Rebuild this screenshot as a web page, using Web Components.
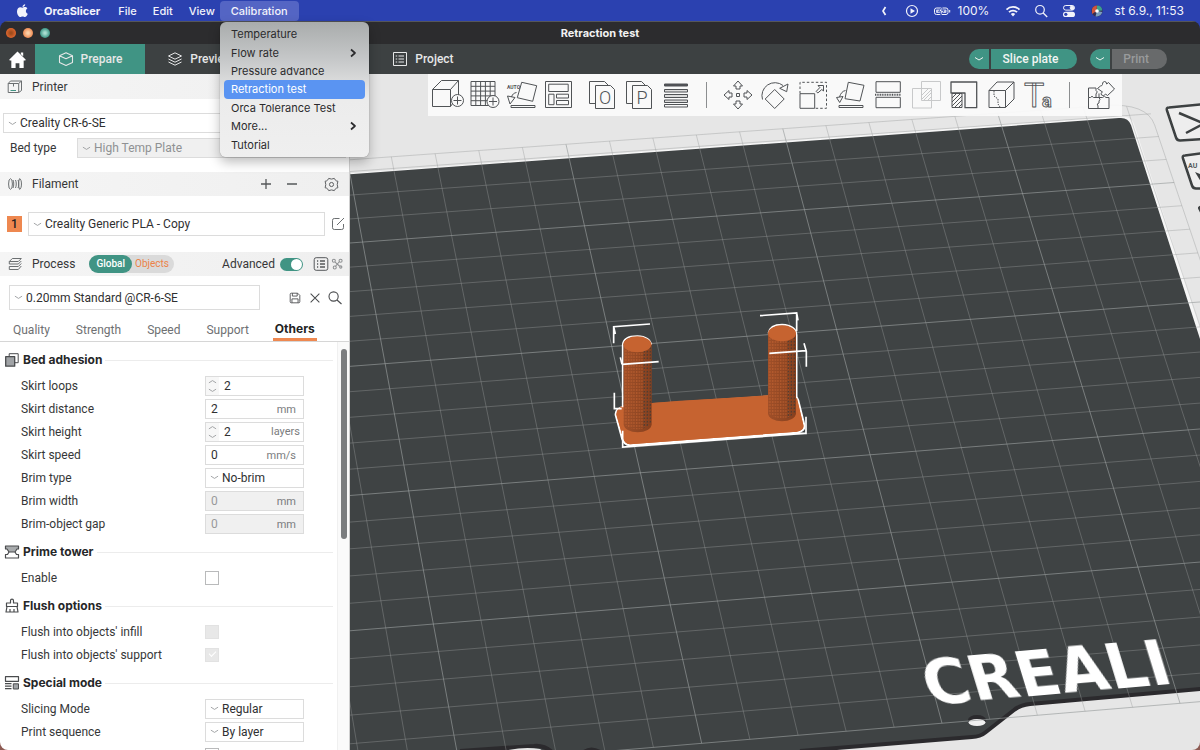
<!DOCTYPE html>
<html lang="en">
<head>
<meta charset="utf-8">
<title>OrcaSlicer</title>
<style>
  html, body { margin: 0; height: 100%; overflow: hidden; }
  body {
    font: 12px/16px Roboto, "Liberation Sans", sans-serif;
    color: #363738;
    background: #8d5a52;
  }
</style>
</head>
<body>
<orca-desktop></orca-desktop>

<script>
const BASE = `<style>
  *, *::before, *::after { box-sizing: border-box; }
  :host { display: block; }
  button, input, select { font: inherit; color: inherit; margin: 0; padding: 0; border: 0; background: none; border-radius: 0; appearance: none; -webkit-appearance: none; outline: none; }
  button { display: inline-flex; align-items: center; justify-content: center; white-space: nowrap; }
</style>`;

function define(name, html, setup) {
  const template = document.createElement('template');
  template.innerHTML = BASE + html;
  customElements.define(name, class extends HTMLElement {
    constructor() {
      super();
      this.attachShadow({ mode: 'open' }).append(template.content.cloneNode(true));
    }
    connectedCallback() {
      if (setup && !this.ready) { this.ready = true; setup.call(this, this.shadowRoot); }
    }
  });
}

/* Puts the icon named by the host's "icon" attribute in place of the <i> marker */
function placeIcon(host) {
  const icon = document.createElement('ui-icon');
  icon.setAttribute('name', host.getAttribute('icon'));
  host.shadowRoot.querySelector('i').replaceWith(icon);
}

/* ---------- icons: [viewBox size, markup] ---------- */
const plus = (x, y) => `<circle cx="${x}" cy="${y}" r="6" fill="#fafafa"/><path d="M${x - 4} ${y}h8M${x} ${y - 4}v8"/>`;
const ICONS = {
  apple: [16, '<path fill="currentColor" stroke="none" d="M11.2 1.2c.1 1.2-.9 2.7-2.7 2.8-.1-1.3 1.1-2.7 2.7-2.8zM8.4 4.7c.5 0 1.300-.6 2.500-.6 1 0 1.900.5 2.500 1.300-2.300 1.400-1.800 4.500.4 5.400-.6 1.600-1.700 3.300-2.900 3.300-.9 0-1.200-.5-2.300-.5s-1.500.5-2.300.5C4.700 14.100 3 11.100 3 8.500c0-2.800 1.700-4.300 3.300-4.300 1 0 1.700.5 2.100.5z"/>'],
  back: [16, '<path stroke-width="1.700" d="M9.500 4 7 8l2.500 4"/>'],
  play: [16, '<circle cx="8" cy="8" r="5.500" stroke-width="1.200"/><path fill="currentColor" stroke="none" d="M6.500 5.300v5.400L11 8z"/>'],
  battery: [18, '<rect x="1.500" y="6" width="13.500" height="6.500" rx="2"/><rect x="3" y="7.500" width="10.500" height="3.500" rx="1" fill="currentColor" stroke="none" opacity=".8"/><path fill="currentColor" stroke="#2b41b0" stroke-width=".8" d="M9.500 4 5.500 9.700H8L7 14.500l4-5.900H8.700z"/><path d="M16.700 8v2.500"/>'],
  wifi: [16, '<path stroke-width="1.800" d="M1.500 6.600a9.200 9.200 0 0 1 13 0M4 9.200a5.700 5.700 0 0 1 8 0"/><path fill="currentColor" stroke="none" d="m8 13.500-2.200-2.400a3 3 0 0 1 4.400 0z"/>'],
  search: [16, '<circle cx="7" cy="6.800" r="4.300" stroke-width="1.200"/><path stroke-width="1.300" d="m10.200 10 4 4"/>'],
  control: [16, '<rect x="2.500" y="2.500" width="11" height="4.600" rx="2.300"/><circle cx="11" cy="4.800" r="1.800" fill="currentColor"/><rect x="2" y="8.700" width="12" height="5.300" rx="2.600" fill="currentColor" stroke="none"/><circle cx="4.800" cy="11.300" r="1.600" fill="#2b41b0" stroke="none"/>'],
  siri: [16, '<circle cx="8" cy="8" r="5.600" fill="#352f55" stroke="none"/><path fill="#d0553c" stroke="none" d="M3 6a5.500 5.500 0 0 1 5-3.500L7.500 8 3 11z"/><path fill="#3ba08c" stroke="none" d="M8 2.500a5.500 5.500 0 0 1 5.300 5L8 8z"/><path fill="#7a9fc0" stroke="none" d="M13.300 9 8 8l-1.500 5.200c3 .8 6-1 6.800-4.200z"/><circle cx="8" cy="8" r="1.800" fill="#fff" stroke="none"/>'],
  home: [20, '<path fill="currentColor" stroke="none" d="M10 1.500 18.500 10c.4.500.1 1-.5 1h-1.500v8h-4.500v-5H8v5H3.500v-8H2c-.6 0-.9-.5-.5-1zM13.500 2.500h2.500v4l-2.500-2z"/>'],
  prepare: [16, '<path stroke-width="1.100" d="M8 1.700 14.500 4.700v6.800L8 14.500 1.500 11.500V4.700zM1.500 4.700 8 7.700l6.500-3"/>'],
  preview: [16, '<path d="M8 1.800 14.500 5 8 8.200 1.500 5zM1.500 8 8 11.200 14.500 8M1.500 11 8 14.200l6.500-3.200"/>'],
  project: [16, '<rect x="1.500" y="1.500" width="13" height="13"/><path d="M3.700 5h1.500M3.700 8h1.500M3.700 11h1.500M6.500 5h5.500M6.500 8h5.500M6.500 11h5.500"/>'],
  params: [16, '<rect x="1.200" y="1.700" width="13.600" height="12.600" rx="2"/><path stroke-width="1.300" d="M4 5h1.200M4 8h1.200M4 11h1.200M7 5h5M7 8h5M7 11h5"/>'],
  printer: [16, '<path d="M1.200 4.500h10.500v9H1.200zM1.200 4.500 3.500 2h11v9.500l-2.800 2M11.700 4.500 14.500 2M6.500 4.500v3"/><path stroke="#409484" d="M3.500 11.500h5.500"/>'],
  spool: [16, '<ellipse cx="3.500" cy="8" rx="1.900" ry="5.300"/><path d="M6 4c1 2 1 6 0 8M8.500 4c1 2 1 6 0 8M11 4c1 2 1 6 0 8M12.500 2.700c2.600 0 2.600 10.600 0 10.600-1.200-2.600-1.200-8 0-10.600z"/>'],
  plus: [16, '<path stroke-width="1.300" d="M3 8h10M8 3v10"/>'],
  minus: [16, '<path stroke-width="1.300" d="M3 8h10"/>'],
  gear: [16, '<path d="M5 1.500q3 1.400 6 0l1.300 2q.3.700 2.500 1-1.400 3.500 0 7-2.200.3-2.500 1l-1.300 2q-3-1.400-6 0l-1.300-2q-.3-.7-2.500-1 1.400-3.500 0-7 2.200-.3 2.500-1z"/><circle cx="8" cy="8" r="2.200"/>'],
  edit: [16, '<path d="M9.500 2.500H4.300Q2.500 2.500 2.500 4.300v7.400q0 1.800 1.800 1.800h7.400q1.800 0 1.800-1.800V8M7 9l7-7"/>'],
  process: [16, '<path d="M5.300 2.500h9l-3 3h-9zM2.300 8h9l3-3M2.300 10.500h9l3-3M2.300 13.500h9l3-3.500M2.300 5.500v2.500M2.300 10.500v3"/>'],
  nodes: [16, '<g stroke-width="1.400"><circle cx="3.800" cy="3.600" r="2"/><circle cx="12.800" cy="3.600" r="2"/><circle cx="5" cy="12.600" r="2"/><circle cx="13" cy="12" r="1.500"/><path d="m5.500 5.500 6 5.500M11 5 6 11"/></g>'],
  save: [16, '<path d="M2.500 3.800q0-1.300 1.300-1.300h7.200l2.500 2.500v7.200q0 1.300-1.300 1.300H3.800q-1.300 0-1.300-1.300zM5 2.500v3.300h5.500V2.500M4.500 13.500V9h7v4.500"/>'],
  close: [16, '<path stroke-width="1.200" d="m3 3 10 10M13 3 3 13"/>'],
  find: [16, '<circle cx="6.600" cy="6.500" r="4.600" stroke-width="1.100"/><path stroke-width="1.100" d="m10 10 4.500 4"/>'],
  down: [10, '<path d="m1 3.500 4 2.500 4-2.500"/>'],
  right: [10, '<path stroke-width="1.700" d="m3 1.500 4 3.500-4 3.500"/>'],
  adhesion: [16, '<rect x="5.200" y="1.700" width="9" height="9"/><rect x="1.700" y="4.700" width="9" height="9.500" fill="#a0a3a6" stroke-width="1.300"/>'],
  tower: [16, '<path fill="#a8abad" stroke-width="1.200" d="M1.500 2h13v3H13l-2 3H5L3 5H1.500z"/><path stroke-width="1.200" d="M5 8 3.500 10.500h-2v3.500h13v-3.500h-2L11 8"/>'],
  flush: [16, '<path stroke-width="1.200" d="M6.500 5V2.700a1.500 1.500 0 0 1 3 0V5h4v3.500h-11V5zM3 8.500 2 14h12l-1-5.500M6 14v-3M10 14v-3"/>'],
  special: [16, '<path stroke-width="1.200" d="M1.500 1.700h13v4.600h-13zM1 8.700h6.500M1 11.200h6.500M1 13.700h6.500"/><rect x="9.300" y="8.800" width="5.200" height="5.200" fill="#a0a3a6"/>'],

  addCube: [32, `<path d="M.5 10.500h18v17H.5zM.5 10.500l9-9h17v15l-8 11M18.500 10.500l8-9"/>${plus(25.5, 21.5)}`],
  addPlate: [32, `<path d="M2 2.500h24v24H2zM6.800 2.500v24M11.600 2.500v24M16.400 2.500v24M21.200 2.500v24M2 7.300h24M2 12.100h24M2 16.900h24M2 21.700h24"/>${plus(24, 22.500)}`],
  autoOrient: [32, '<path d="M15.700 3.300l15 3.400-4 15.600-15.400-3.600zM5 26.500h24v2H5zM1.500 17l7.500 1.500-5 6.500zM5.500 18c1-3 2.500-4 5-4.500"/><text x="1" y="10" font-size="5" font-weight="700" fill="currentColor" stroke="none">AUTO</text>'],
  arrange: [32, '<path d="M2.500 2.500h26v26h-26zM5.700 5.200h19.500v7.300H5.700zM5.700 15.200h5.300v10.500H5.700zM13.500 15.200h12v3.800h-12zM13.500 21.500h12v4.200h-12z"/>'],
  objects: [32, '<path d="M9 24.500H3.500v-22h15l4 4M9.500 6.500h15l4 4v19h-19z"/><text x="19" y="25" font-size="18" font-family="Roboto" font-weight="300" text-anchor="middle" fill="currentColor" stroke="none">O</text>'],
  parts: [32, '<path d="M9 24.500H3.500v-22h15l4 4M9.500 6.500h15l4 4v19h-19z"/><text x="19" y="25" font-size="18" font-family="Roboto" font-weight="300" text-anchor="middle" fill="currentColor" stroke="none">P</text>'],
  layers: [32, '<path fill="currentColor" d="M4.500 5h23v2h-23z"/><path fill="#ddd" d="M4.500 10.500h23v2.500h-23zM4.500 15.500h23v3h-23zM4.500 21h23v2.500h-23z"/><path d="M4.500 25.500h23v2.500h-23z"/>'],
  move: [32, '<path d="M14.500 14.500h3v3h-3zM16 2l4.500 5h-2.500v3h-4V7h-2.500zM16 30l4.500-5h-2.500v-3h-4v3h-2.500zM2 16l5-4.500V14h3v4H7v2.500zM30 16l-5-4.500V14h-3v4h3v2.500z"/>'],
  rotate: [32, '<path d="M15.700 10.500l9.500 9.500-9.500 9.500L6.200 20zM3.500 20.500A13 13 0 0 1 24 6.500M29 5l-1.300 7.700-7-3.400z"/>'],
  scale: [32, '<path stroke-dasharray="2.500 2" d="M3 14.500v-11.200h26.500v26h-11"/><path d="M3 14.700h14.700v14.600H3zM21 6.500h5.500V12l-1.700-1.500-4 3.500-1.600-1.600 3.600-3.800z"/>'],
  lay: [32, '<path d="M14.300 3.300l15.700 3-4 15.700-15-2.300zM5 26.500h24v2H5zM2.500 18.500l6.500-1-3.300 6zM5.500 18c1-3.500 3-6 6-6.500"/>'],
  cut: [32, '<path d="M4 2.700h24.300v10.600H4zM4 18.300h24.300v10.400H4z"/><path stroke-width="2" stroke-dasharray="1 .7" d="M3 15.800h26"/>'],
  boolean: [32, '<path stroke="#c8c9ca" d="M2.500 9.500h19v19.500h-19zM11.500 2.500h19v19h-19zM12 16l6-6M12 20l9-9M14 21l7-7M18 21l3-3"/>'],
  paint: [32, '<path stroke-width="1.300" d="M4 3h25.700v25.700H18V14H4z"/><path d="M5 14.500h10v14H5zM5 19l4.500-4.500M5 23l8.500-8.500M5 27l10-10M7.500 28.500 15 21M11.500 28.500 15 25"/>'],
  seam: [32, '<path d="M4 11.500h16.500v17H4zM4 11.500 12 3h17v17l-8.500 8.500M20.500 11.500 29 3"/><path stroke-dasharray="1.500 1" d="M9 12v5l4 3v5l2 3"/>'],
  emboss: [32, '<text x="2" y="28" font-size="34" font-family="Roboto" fill="#fafafa" stroke-width=".9">T</text><text x="20" y="28" font-size="18" font-family="Roboto" font-weight="700" fill="#fafafa" stroke-width=".9">a</text>'],
  assembly: [32, '<path d="M3.500 9h7.500v2.500q2.500 1 0 3.500v3.500H8.500q-1.500-2.500-3 0h-2zM3.500 18.500v11h20.500v-11h-3q-1.500-2.500-3.500 0H14v-4M14 18.500q2 2 0 3.500v2q-3 .5-1 3v2.500M11 18.500h3"/><path fill="#fafafa" d="M12.500 9.500l3-2.500q1.500 0 2-1.500-.5-2.500 2-3 2 0 2.200 2.500l1.800-1.500 6 6.500-7 6.500-2-1.500q-1.500 3-4 1-1.500-2 1-3z"/>']
};

define('ui-icon', `<style>
  :host { display: inline-flex; flex: none; }
  svg { display: block; overflow: visible; fill: none; stroke: currentColor; stroke-linejoin: round; }
</style><svg aria-hidden="true"></svg>`, function (root) {
  const [box, body] = ICONS[this.getAttribute('name')];
  const size = this.getAttribute('size') || box;
  const svg = root.querySelector('svg');
  svg.setAttribute('viewBox', `0 0 ${box} ${box}`);
  svg.setAttribute('width', size);
  svg.setAttribute('height', size);
  svg.innerHTML = body;
});

/* ---------- system menu bar ---------- */
define('mac-menubar', `<style>
  :host { display: flex; justify-content: space-between; height: 21px; padding-right: 16px; background: #2b41b0; color: #f2f3fb; position: relative; z-index: 2; font-family: Inter, "Liberation Sans", sans-serif; }
  nav, .status { display: flex; align-items: center; }
  nav { padding-left: 14px; position: relative; font-size: 11px; }
  nav > button { height: 20px; padding: 0 11px; margin: 0 -3px; border-radius: 4px; font-weight: 500; }
  nav > button.apple { padding: 0; margin: 0 6px 0 0; width: 16px; }
  nav > button.app { font-weight: 700; margin-right: -1px; }
  nav > button[aria-expanded=true] { background: #5465c4; }
  .status button { width: 28px; }
  .status button.wide { width: 32px; }
  .percent { width: 41px; }
  .clock { padding-left: 4px; }
  .anchor { position: absolute; left: 220px; top: 22px; }
</style>
<nav aria-label="Menu bar">
  <button class="apple" aria-label="Apple menu"><ui-icon name="apple"></ui-icon></button>
  <button class="app">OrcaSlicer</button><button>File</button><button>Edit</button><button>View</button><button aria-expanded="true">Calibration</button>
  <div class="anchor"><slot name="menu"></slot></div>
</nav>
<div class="status">
  <button aria-label="Show more"><ui-icon name="back"></ui-icon></button>
  <button aria-label="Now playing"><ui-icon name="play"></ui-icon></button>
  <button class="wide" aria-label="Battery"><ui-icon name="battery"></ui-icon></button>
  <span class="percent">100%</span>
  <button aria-label="Wi-Fi"><ui-icon name="wifi"></ui-icon></button>
  <button aria-label="Search"><ui-icon name="search"></ui-icon></button>
  <button aria-label="Control Center"><ui-icon name="control"></ui-icon></button>
  <button aria-label="Siri"><ui-icon name="siri"></ui-icon></button>
  <span class="clock">st 6.9., 11:53</span>
</div>`);

define('drop-menu', `<style>
  :host { display: grid; grid-auto-rows: 1fr; width: 149px; min-height: 135px; padding: 3px 4px; border-radius: 6px; color: #2b2b2d;
    background: linear-gradient(#a9acac, #c6c8c9 28%, #ececec 58%, #efefef); box-shadow: 0 0 1px #0008, 0 5px 12px #0004; }
</style><slot></slot>`, function () { this.setAttribute('role', 'menu'); });

define('menu-item', `<style>
  button { width: 100%; height: 100%; padding: 0 7px; justify-content: space-between; border-radius: 4px; }
  :host([active]) button { background: #5a94f2; color: #fff; }
  ui-icon { display: none; }
  :host([sub]) ui-icon { display: inline-flex; }
</style><button role="menuitem"><slot></slot><ui-icon name="right"></ui-icon></button>`);

/* ---------- window chrome ---------- */
define('title-bar', `<style>
  :host { display: grid; grid-template-columns: 1fr auto 1fr; align-items: center; height: 23px; padding: 0 6px; background: #2c2c2e; color: #f2f2f2; font-family: Inter, "Liberation Sans", sans-serif; font-size: 11px; font-weight: 700; border-top: 1px solid #55565a; }
  .lights { display: flex; gap: 6px; }
  .lights button { width: 10px; height: 10px; margin-right: 1px; border-radius: 50%; background: radial-gradient(#a04c1c 1px, #e0672f 5px); }
  .lights button:nth-child(2) { background: radial-gradient(#fbd0a8 1px, #ee8a52 5px); }
  .lights button:nth-child(3) { background: radial-gradient(#a8dccf 1px, #3a9484 5px); }
</style>
<div class="lights"><button aria-label="Close"></button><button aria-label="Minimize"></button><button aria-label="Zoom"></button></div>
<slot></slot>`);

define('app-tab', `<style>
  button { height: 30px; width: 110px; gap: 7px; color: #e6e7e7; font-weight: 500; }
  :host([active]) button { background: #409484; }
</style><button role="tab"><i></i><slot></slot></button>`, function () { placeIcon(this); });

define('split-button', `<style>
  :host { display: flex; gap: 2px; font-weight: 500; color: #f2f4f3; }
  button { height: 20px; background: #409484; }
  .more { width: 20px; border-radius: 10px 0 0 10px; }
  .main { border-radius: 0 10px 10px 0; padding: 0 19px 0 12px; }
  :host([off]) .main { background: #686a6b; color: #999b9c; padding: 0 18px 0 11px; }
</style><button class="more" aria-label="More options"><ui-icon name="down"></ui-icon></button><button class="main"><slot></slot></button>`);

define('tab-bar', `<style>
  :host { display: flex; align-items: center; height: 30px; padding-right: 33px; background: #3d4142; }
  .home { width: 35px; height: 30px; color: #fff; }
  .late { margin-left: 113px; }
  .actions { display: flex; gap: 13px; margin-left: auto; }
</style>
<button class="home" aria-label="Home"><ui-icon name="home" size="19"></ui-icon></button>
<app-tab icon="prepare" active>Prepare</app-tab>
<app-tab icon="preview">Preview</app-tab>
<app-tab icon="project" class="late">Project</app-tab>
<div class="actions"><split-button>Slice plate</split-button><split-button off>Print</split-button></div>`);

/* ---------- side panel ---------- */
define('panel-header', `<style>
  :host { display: flex; align-items: center; height: 24px; padding: 0 10px 0 7px; background: linear-gradient(90deg, #f5f5f5, #efefef); }
  ui-icon { margin-right: 9px; color: #6b6f71; }
  .end { display: flex; align-items: center; margin-left: auto; }
</style><i></i><slot></slot><div class="end"><slot name="end"></slot></div>`, function () { placeIcon(this); });

define('combo-box', `<style>
  :host { display: grid; height: 20px; background: #fff; color: #2f3031; }
  ui-icon, select { grid-area: 1 / 1; }
  ui-icon { place-self: center start; margin-left: 5px; color: #9a9c9e; pointer-events: none; z-index: 1; }
  select { width: 100%; height: 100%; padding-left: 16px; border: 1px solid #dcdcdc; }
  select:disabled { background: #f0f0f0; color: #8f9193; opacity: 1; }
</style><select><option></option></select><ui-icon name="down" size="9"></ui-icon>`, function (root) {
  const select = root.querySelector('select');
  root.querySelector('option').textContent = this.getAttribute('value');
  select.setAttribute('aria-label', this.getAttribute('label'));
  select.disabled = this.hasAttribute('disabled');
});

/* One labelled setting: kind is number, spin, choice or check */
define('setting-row', `<style>
  :host { display: grid; grid-template-columns: 184px 99px; align-items: center; height: 23px; padding-left: 21px; }
  .field { display: flex; align-items: center; height: 20px; border: 1px solid #dcdcdc; background: #fff; }
  .field.off { background: #f0f0f0; color: #98999b; }
  input[type=text] { flex: 1; min-width: 0; height: 100%; padding-left: 5px; color: #2f3031; }
  .field.off input { color: #98999b; }
  .unit { font-size: 11px; padding: 2px 7px 0 0; color: #7a7c7e; }
  .spin .unit { padding: 0 3px 0 0; }
  .steps { width: 13px; height: 18px; display: grid; grid-auto-rows: 9px; background: #f7f7f7; color: #9a9c9e; }
  .steps ui-icon { place-self: center; }
  .steps ui-icon:first-child { transform: rotate(180deg); }
  input[type=checkbox] { width: 14px; height: 14px; border: 1px solid #b9babb; background: #fff; display: grid; place-items: center; }
  input[type=checkbox]:disabled { border-color: #e2e2e2; background: #e8e8e8; }
  input[type=checkbox]:checked::after { content: ""; width: 7px; height: 4px; border: solid #fff; border-width: 0 0 1px 1px; transform: rotate(-45deg); margin-bottom: 3px; }
</style><label for="c"></label>`, function (root) {
  const get = n => this.getAttribute(n);
  const off = this.hasAttribute('disabled') ? ' disabled' : '';
  root.querySelector('label').textContent = get('label');
  const steps = '<span class="steps"><ui-icon name="down" size="9"></ui-icon><ui-icon name="down" size="9"></ui-icon></span>';
  const unit = get('unit') ? `<span class="unit">${get('unit')}</span>` : '';
  const html = {
    number: () => `<span class="field${off && ' off'}"><input id="c" type="text" value="${get('value')}"${off}>${unit}</span>`,
    spin: () => `<span class="field spin">${steps}<input id="c" type="text" value="${get('value')}">${unit}</span>`,
    choice: () => `<combo-box id="c" label="${get('label')}" value="${get('value')}"></combo-box>`,
    check: () => `<input id="c" type="checkbox"${off}${this.hasAttribute('checked') ? ' checked' : ''}>`
  }[get('kind')]();
  root.querySelector('label').insertAdjacentHTML('afterend', html);
});

define('setting-group', `<style>
  :host { margin-bottom: 5px; }
  h3 { display: flex; align-items: center; gap: 3px; height: 24px; margin: 0 4px 2px; font: 700 12px/16px Inter, "Liberation Sans", sans-serif; color: #262728; }
  h3::after { content: ""; flex: 1; height: 1px; background: #ececec; }
  ui-icon { color: #4a4c4e; }
</style><h3><i></i><span></span></h3><slot></slot>`, function (root) {
  placeIcon(this);
  root.querySelector('span').textContent = this.getAttribute('heading');
});

define('side-panel', `<style>
  :host { display: flex; flex-direction: column; width: 350px; flex: none; background: #fff; border-right: 1px solid #cfcfcf; overflow: hidden; min-height: 0; }
  .tool { width: 26px; height: 20px; color: #55585a; }
  .tool.last { width: 16px; margin-left: 18px; }
  .row { display: flex; align-items: center; }
  .row combo-box { flex: 1; }
  .first { height: 25px; }
  .printer { padding: 14px 3px; display: grid; gap: 5px; }
  .bed label { width: 74px; padding-left: 7px; }
  .filament { padding: 16px 5px 16px 7px; gap: 6px; }
  .filament combo-box { height: 24px; }
  .swatch { width: 15px; height: 16px; background: #ee8850; color: #222; font-weight: 500; }
  .edit { color: #6b6f71; width: 13px; }
  .preset { padding: 9px 4px 0 9px; }
  .preset combo-box { height: 25px; flex: none; width: 251px; }
  .preset .tools { margin-left: auto; display: flex; }
  .preset button { width: 20px; color: #4a4c4e; }
  .scope { display: flex; margin-left: 14px; height: 18px; border-radius: 9px; background: #dadada; font-size: 10px; }
  .scope button { padding: 0 5px 0 3px; color: #ec8248; }
  .scope button[aria-pressed=true] { padding: 0 7px; border-radius: 9px; background: #409484; color: #fff; font-weight: 500; }
  .adv { display: flex; align-items: center; gap: 5px; margin-right: 10px; }
  .adv input { width: 23px; height: 13px; border-radius: 7px; background: #409484; display: flex; justify-content: flex-end; padding: 1px; }
  .adv input::after { content: ""; width: 11px; height: 11px; border-radius: 50%; background: #fff; }
  .icon { width: 16px; color: #55585a; }
  .icon.dim { color: #8f9193; }
  panel-header.proc { padding-right: 4px; }
  .tabs { display: flex; gap: 26px; height: 32px; padding: 8px 13px 0; border-bottom: 1px solid #d6d6d6; color: #6e7072; }
  .tabs button { height: 23px; }
  .tabs button[aria-selected=true] { font: 700 12px/16px Inter, "Liberation Sans", sans-serif; color: #222; border-bottom: 3px solid #ee8850; padding: 2px 2px 0; margin-left: -2px; }
  .scroll { flex: 1; min-height: 0; display: flex; overflow: hidden; }
  .list { flex: 1; padding-top: 6px; }
  .track { width: 12px; background: #fafafa; padding: 7px 2px 0 3px; border-left: 1px solid #f0f0f0; }
  .thumb { height: 190px; border-radius: 4px; background: #7b7d7f; }
</style>
<panel-header icon="printer" class="first">Printer</panel-header>
<div class="printer">
  <div class="row"><combo-box label="Printer preset" value="Creality CR-6-SE"></combo-box></div>
  <div class="row bed"><label for="bed">Bed type</label><combo-box id="bed" label="Bed type" value="High Temp Plate" disabled></combo-box></div>
</div>
<panel-header icon="spool">Filament
  <button slot="end" class="tool" aria-label="Add filament"><ui-icon name="plus" size="16"></ui-icon></button>
  <button slot="end" class="tool" aria-label="Remove filament"><ui-icon name="minus" size="16"></ui-icon></button>
  <button slot="end" class="tool last" aria-label="Filament settings"><ui-icon name="gear" size="15"></ui-icon></button>
</panel-header>
<div class="row filament">
  <button class="swatch" aria-label="Filament 1 colour">1</button>
  <combo-box label="Filament preset" value="Creality Generic PLA - Copy"></combo-box>
  <button class="edit" aria-label="Edit filament"><ui-icon name="edit"></ui-icon></button>
</div>
<panel-header icon="process" class="proc">Process
  <div class="scope"><button aria-pressed="true">Global</button><button aria-pressed="false">Objects</button></div>
  <div slot="end" class="adv"><label for="adv">Advanced</label><input id="adv" type="checkbox" role="switch" checked></div>
  <button slot="end" class="icon" aria-label="Parameter list"><ui-icon name="params"></ui-icon></button>
  <button slot="end" class="icon dim" aria-label="Compare presets"><ui-icon name="nodes" size="12"></ui-icon></button>
</panel-header>
<div class="row preset">
  <combo-box label="Process preset" value="0.20mm Standard @CR-6-SE"></combo-box>
  <div class="tools">
    <button aria-label="Save"><ui-icon name="save" size="14"></ui-icon></button>
    <button aria-label="Discard"><ui-icon name="close" size="14"></ui-icon></button>
    <button aria-label="Search"><ui-icon name="find"></ui-icon></button>
  </div>
</div>
<div class="tabs" role="tablist">
  <button role="tab">Quality</button><button role="tab">Strength</button><button role="tab">Speed</button><button role="tab">Support</button><button role="tab" aria-selected="true">Others</button>
</div>
<div class="scroll">
  <div class="list">
    <setting-group icon="adhesion" heading="Bed adhesion">
      <setting-row kind="spin" label="Skirt loops" value="2"></setting-row>
      <setting-row kind="number" label="Skirt distance" value="2" unit="mm"></setting-row>
      <setting-row kind="spin" label="Skirt height" value="2" unit="layers"></setting-row>
      <setting-row kind="number" label="Skirt speed" value="0" unit="mm/s"></setting-row>
      <setting-row kind="choice" label="Brim type" value="No-brim"></setting-row>
      <setting-row kind="number" label="Brim width" value="0" unit="mm" disabled></setting-row>
      <setting-row kind="number" label="Brim-object gap" value="0" unit="mm" disabled></setting-row>
    </setting-group>
    <setting-group icon="tower" heading="Prime tower">
      <setting-row kind="check" label="Enable"></setting-row>
    </setting-group>
    <setting-group icon="flush" heading="Flush options">
      <setting-row kind="check" label="Flush into objects' infill" disabled></setting-row>
      <setting-row kind="check" label="Flush into objects' support" disabled checked></setting-row>
    </setting-group>
    <setting-group icon="special" heading="Special mode">
      <setting-row kind="choice" label="Slicing Mode" value="Regular"></setting-row>
      <setting-row kind="choice" label="Print sequence" value="By layer"></setting-row>
      <setting-row kind="check" label=""></setting-row>
    </setting-group>
  </div>
  <div class="track"><div class="thumb"></div></div>
</div>`);

/* ---------- 3D view ---------- */
define('tool-strip', `<style>
  :host { display: flex; align-items: center; width: 694px; height: 42px; padding: 0 3px 0 1px; background: #fafafaee; color: #505356; }
  .group { display: flex; }
  .group.wide { flex: 1; }
  .group button { width: 37px; height: 42px; }
  .group.wide button { flex: 1; }
  .group + .group { margin-left: 6px; }
  hr { width: 1px; height: 26px; margin: 0 12px; border: 0; background: #8c8e90; }
</style>
<div class="group" data-tools="addCube:Add,addPlate:Add plate,autoOrient:Auto orient,arrange:Arrange all objects"></div>
<div class="group" data-tools="objects:Split to objects,parts:Split to parts,layers:Variable layer height"></div>
<hr>
<div class="group wide" data-tools="move:Move,rotate:Rotate,scale:Scale,lay:Lay on face,cut:Cut,boolean:Mesh boolean,paint:Supports painting,seam:Seam painting,emboss:Text shape"></div>
<hr>
<div class="group" data-tools="assembly:Assembly view"></div>`, function (root) {
  for (const group of root.querySelectorAll('[data-tools]')) {
    group.innerHTML = group.dataset.tools.split(',').map(t => {
      const [name, label] = t.split(':');
      return `<button aria-label="${label}"><ui-icon name="${name}"></ui-icon></button>`;
    }).join('');
  }
});

define('plate-view', `<style>
  :host { display: grid; flex: 1; min-width: 0; min-height: 0; background: #e6e6e6; overflow: hidden; }
  svg, tool-strip { grid-area: 1 / 1; }
  svg { width: 100%; height: 100%; display: block; min-height: 0; }
  tool-strip { align-self: start; margin-left: 78px; z-index: 1; }
</style>
<svg viewBox="350 74 850 676" preserveAspectRatio="xMinYMin slice" fill="none" role="img" aria-label="Build plate with the retraction test model">
  <defs>
    <linearGradient id="side"><stop offset="0" stop-color="#a04f28"/><stop offset=".35" stop-color="#964a25"/><stop offset="1" stop-color="#87401e"/></linearGradient>
    <pattern id="dots" width="8" height="9" patternUnits="userSpaceOnUse"><path d="M0 3h4" stroke="#d06a35" stroke-width="2.500"/></pattern>
    <pattern id="holes" width="9" height="10" patternUnits="userSpaceOnUse"><path d="M2 6l4-2" stroke="#3a3a38" stroke-width="3"/></pattern>
    <filter id="soft"><feGaussianBlur stdDeviation=".7"/></filter>
  </defs>
  <path fill="#f6f6f6" d="M300 177 1120 116q11 0 14 8l70 214V400H300z"/>
  <path fill="#3f4344" d="M300 178 1119 118q9-1 12 7L1210 370V688L1028 704q-8 1-14 6l-27 22q-6 5-14 5L820 750V770H300z"/>
  <path stroke="#2b2a2d" stroke-width="4" d="M1210 688 1030 704q-10 1-16 6l-28 22q-6 5-14 5L800 751M460 751 534 746q10-1 18 6M584 752q7-5 16 0"/>
  <path fill="#e6e6e6" d="M500 752q22-6 40-3l8 5z"/>
  <ellipse cx="977" cy="720" rx="9" ry="5" fill="#2b2a2d"/><ellipse cx="977" cy="722.500" rx="8.500" ry="3.500" fill="#f0f0f0"/>
  <g id="grid"></g>
  <g stroke="#3d4142" stroke-width="2.500" stroke-linejoin="round">
    <path fill="#eee" d="M1204 104 1169 107.500q-3 0-2 3l9 27q1 3 4 3l24-1.500"/>
    <path d="m1179 113 25 10.500-18 9.500"/>
    <path fill="#eee" d="M1204 153 1185 155.500q-3 0-2 3l9 27q1 3 4 3h8"/>
    <path fill="#3d4142" stroke="none" d="m1195 172 8 3v10z"/><path stroke-width="4" d="m1204 206-4 2 4 8"/>
  </g>
  <text x="1188" y="168" font-family="Roboto, sans-serif" font-size="7" font-weight="700" fill="#55585a">AU</text>
  <text x="0" y="0" transform="translate(930 705) rotate(-5) skewX(12)" font-family="'DejaVu Sans', sans-serif" font-weight="700" font-size="62" fill="#fff" filter="url(#soft)">CREALI</text>
  <g transform="translate(580 290) scale(.33333)">
    <path fill="#c66330" stroke="#fff" stroke-width="6" d="M107 375Q105 357 130 350L635 315Q650 316 655 332L673 405Q676 424 650 428L150 466Q132 464 126 445Z"/>
    <path stroke="#c66330" stroke-width="9" d="M140 349 635 315"/>
    <path fill="#c66330" d="M109 375Q107 357 130 346L300 332 635 313Q650 313 653 332L670 405Q673 421 650 425L150 463Q134 461 129 443Z"/>
    <path stroke="#fff" stroke-width="5" d="M128 352V165Q130 138 172 138 210 140 214 165"/>
    <path fill="url(#side)" d="M131 163V403a42 24 0 0 0 84 0V163z"/>
    <path fill="url(#dots)" d="M131 170V395a42 24 0 0 0 62 20V170z"/>
    <path fill="url(#holes)" d="M188 184V418L214 400V168z"/>
    <ellipse cx="172" cy="163" rx="42" ry="24" fill="#c66330"/>
    <path stroke="#fff" stroke-width="5" d="M565 130Q570 104 606 104 648 106 650 135V325"/>
    <path fill="url(#side)" d="M564 130V370a42 24 0 0 0 84 0V130z"/>
    <path fill="url(#dots)" d="M564 137V362a42 24 0 0 0 62 20V137z"/>
    <path fill="url(#holes)" d="M622 152V386L648 366V134z"/>
    <ellipse cx="606" cy="130" rx="42" ry="24" fill="#c66330"/>
    <path stroke="#fff" stroke-width="5" d="M210 102 101 110V160M101 110l5 22M540 77 650 69l4 22M650 69v55M236 215 126 223M121 202l5 21M568 190 678 182M672 160l7 24v46M103 308v48h22M128 422v49l545-41M678 380v50h-22"/>
  </g>
</svg>
<tool-strip></tool-strip>`, function (root) {
  /* Bed coordinates (cells, origin front-left) to screen: projective map of a unit square onto a quad */
  const p = [[701.7, 743.3], [1180, 703.3], [997.7, 113.3], [566, 144.3]];
  const dx1 = p[1][0] - p[2][0], dx2 = p[3][0] - p[2][0], sx = p[0][0] - p[1][0] + p[2][0] - p[3][0];
  const dy1 = p[1][1] - p[2][1], dy2 = p[3][1] - p[2][1], sy = p[0][1] - p[1][1] + p[2][1] - p[3][1];
  const det = dx1 * dy2 - dx2 * dy1;
  const g = (sx * dy2 - dx2 * sy) / det, h = (dx1 * sy - sx * dy1) / det;
  const a = p[1][0] - p[0][0] + g * p[1][0], b = p[3][0] - p[0][0] + h * p[3][0];
  const d = p[1][1] - p[0][1] + g * p[1][1], e = p[3][1] - p[0][1] + h * p[3][1];
  const at = (u, v) => {
    const s = (u - 10) / 10, t = v / 23.5, w = g * s + h * t + 1;
    return ((a * s + b * t + p[0][0]) / w).toFixed(1) + ' ' + ((d * s + e * t + p[0][1]) / w).toFixed(1);
  };
  let minor = '', major = '';
  for (let i = 0; i <= 23; i++) {
    const line = `M${at(i, 0)}L${at(i, i === 23 ? 23.4 : 23.5)}M${at(0, i)}L${at(23.5, i)}`;
    if (i % 5) minor += line; else major += line;
  }
  const edge = `M${at(0, 23.5)}L${at(22.5, 23.5)}Q${at(23.5, 23.5)} ${at(23.5, 22.5)}L${at(23.5, 0)}`;
  root.querySelector('#grid').innerHTML =
    `<path d="${minor}${edge}" stroke="#989c9c" stroke-opacity=".4"/><path d="${major}" stroke="#989c9c" stroke-opacity=".65"/>`;
});

/* ---------- page ---------- */
define('orca-desktop', `<style>
  :host { display: flex; flex-direction: column; height: 100vh; background: linear-gradient(#2b41b0 0 60px, #8d5a52 60px); }
  .window { flex: 1; min-height: 0; display: flex; flex-direction: column; border-radius: 8px; overflow: hidden; }
  main { flex: 1; min-height: 0; display: flex; }
</style>
<mac-menubar>
  <drop-menu slot="menu">
    <menu-item>Temperature</menu-item>
    <menu-item sub>Flow rate</menu-item>
    <menu-item>Pressure advance</menu-item>
    <menu-item active>Retraction test</menu-item>
    <menu-item>Orca Tolerance Test</menu-item>
    <menu-item sub>More...</menu-item>
    <menu-item>Tutorial</menu-item>
  </drop-menu>
</mac-menubar>
<div class="window">
  <title-bar>Retraction test</title-bar>
  <tab-bar></tab-bar>
  <main><side-panel></side-panel><plate-view></plate-view></main>
</div>`);
</script>
</body>
</html>
